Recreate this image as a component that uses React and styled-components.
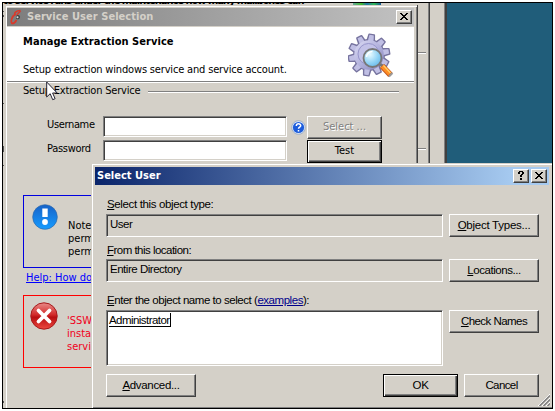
import React from "react";
import styled, { createGlobalStyle, css } from "styled-components";

const Global = createGlobalStyle`
  * { box-sizing: border-box; }
  body { margin: 0; background: #fff; overflow: hidden; }
`;

const tahoma = css`
  font-family: "DejaVu Sans Condensed", "DejaVu Sans", sans-serif;
  font-stretch: condensed;
  font-size: 11px;
`;
const sans = css`
  font-family: "Liberation Sans", Arial, sans-serif;
  font-size: 11.5px;
`;

const Desktop = styled.main`
  position: relative;
  width: 551px;
  height: 407px;
  margin: 2px;
  border: 1px solid #000;
  background: #205d7a;
  overflow: hidden;
  color: #000;
`;

const BackWindow = styled.section`
  position: absolute;
  left: 0;
  top: 0;
  width: 444px;
  height: 405px;
  background: #d4d0c8;
  border-right: 2px solid #404040;
  box-shadow: inset -1px 0 #808080;
  display: flex;
  justify-content: space-between;
`;
const BackText = styled.div`
  ${tahoma}
  font-weight: bold;
  line-height: 8px;
  height: 2px;
  width: 302px;
  overflow: hidden;
  display: flex;
  align-items: flex-end;
  white-space: nowrap;
  letter-spacing: -1px;
`;
const BackIcon = styled.div`
  width: 28px;
  height: 2px;
  background: linear-gradient(90deg, #6a9, #4b3 30%, #27a 50%, #3b5 75%, #159);
`;
const BackPane = styled.div`
  width: 16px;
  height: 405px;
  border-left: 1px solid #404040;
  box-shadow: -1px 0 #808080;
`;
const BackRule = styled.div`
  position: absolute;
  left: 415px;
  top: ${(p) => p.$y}px;
  width: 8px;
  height: 2px;
  background: #808080;
  border-bottom: 1px solid #fff;
`;
const EdgeMark = styled.div`
  position: absolute;
  left: 0;
  top: ${(p) => p.$y}px;
  width: 1px;
  height: ${(p) => p.$h}px;
  background: #555;
`;

const ServiceWindow = styled.section`
  position: absolute;
  left: 2px;
  top: 2px;
  width: 413px;
  height: 410px;
  padding: 3px 3px 0 2px;
  background: #d4d0c8;
  border-right: 1px solid #404040;
  box-shadow: inset 1px 1px #d4d0c8, inset 2px 2px #fff, inset -1px 0 #808080;
`;
const TitleBar = styled.header`
  display: flex;
  align-items: center;
  height: 18px;
  padding: 0 2px 0 ${(p) => (p.$active ? 2 : 3)}px;
  gap: ${(p) => (p.$active ? 2 : 4)}px;
  background: ${(p) =>
    p.$active
      ? "linear-gradient(90deg, #0a246a, #a6caf0 92%)"
      : "linear-gradient(90deg, #7d7d7d, #c2c2c2)"};
  color: ${(p) => (p.$active ? "#fff" : "#d4d0c8")};
`;
const Title = styled.h1`
  ${tahoma}
  flex: 1;
  margin: 0;
  font-weight: bold;
  line-height: 18px;
  letter-spacing: ${(p) => p.$ls || 0}px;
  white-space: nowrap;
`;
const CaptionButton = styled.button`
  width: 16px;
  height: 14px;
  padding: 0;
  border: 1px solid;
  border-color: #fff #404040 #404040 #fff;
  box-shadow: inset -1px -1px #808080;
  background: #d4d0c8;
  display: grid;
  place-items: center;
`;

const Banner = styled.div`
  display: flex;
  justify-content: space-between;
  height: 56px;
  margin-top: 1px;
  padding: 6px 20px 0 16px;
  background: #fff;
  border-bottom: 1px solid #fff;
  box-shadow: inset 0 -1px #808080;
`;
const BannerText = styled.div`
  display: flex;
  flex-direction: column;
  gap: 12px;
  padding-top: 1px;
`;
const Text = styled.span`
  ${tahoma}
  line-height: 16px;
  white-space: nowrap;
  letter-spacing: ${(p) => p.$ls || 0}px;
  font-weight: ${(p) => (p.$bold ? "bold" : "normal")};
`;
const Group = styled.div`
  display: flex;
  align-items: center;
  height: 16px;
  margin-left: 16px;
  width: 376px;
  gap: 8px;
`;
const GroupRule = styled.div`
  flex: 1;
  height: 2px;
  margin-top: 2px;
  background: #808080;
  border-bottom: 1px solid #fff;
`;
const Form = styled.div`
  display: grid;
  grid-template-columns: 56px 184px 20px 75px;
  grid-template-rows: 23px 23px;
  row-gap: 1px;
  margin: 17px 0 0 40px;
`;
const FormLabel = styled(Text).attrs({ as: "label" })`
  line-height: 18px;
`;
const Field = styled.div`
  height: ${(p) => p.$h || 21}px;
  border: 1px solid;
  border-color: #808080 #fff #fff #808080;
  box-shadow: inset 1px 1px #404040, inset -1px -1px #d4d0c8;
  background: ${(p) => (p.$flat ? "#d4d0c8" : "#fff")};
  padding: ${(p) => p.$pad || "1px 3px"};
  line-height: 16px;
  font-size: 11px;
`;
const HelpCell = styled.div`
  padding: 4px 0 0 4px;
  height: 20px;
`;
const Button = styled.button`
  ${(p) => (p.$tahoma ? tahoma : sans)}
  width: ${(p) => p.$w || 90}px;
  height: 23px;
  padding: 0 0 1px;
  white-space: nowrap;
  line-height: 16px;
  letter-spacing: ${(p) => p.$ls || 0}px;
  background: #d4d0c8;
  color: #000;
  border: 1px solid;
  border-color: #fff #404040 #404040 #fff;
  box-shadow: inset -1px -1px #808080;
  ${(p) =>
    p.$default &&
    css`
      border-color: #000;
      box-shadow: inset 1px 1px #fff, inset -1px -1px #404040, inset -2px -2px #808080;
    `}
  ${(p) =>
    p.$disabled &&
    css`
      color: #808080;
      text-shadow: 1px 1px #fff;
    `}
`;
const Notice = styled.div`
  display: flex;
  align-items: flex-start;
  width: 360px;
  height: 73px;
  margin-left: 16px;
  margin-top: ${(p) => p.$mt}px;
  padding: ${(p) => (p.$error ? "6px 0 0 6px" : "8px 0 0 8px")};
  gap: ${(p) => (p.$error ? 9 : 10)}px;
  border: 1px solid ${(p) => (p.$error ? "#f00" : "#0000e0")};
  color: ${(p) => (p.$error ? "#f00020" : "#000")};
`;
const NoticeText = styled.p`
  ${tahoma}
  margin: ${(p) => p.$mt}px 0 0;
  line-height: 13px;
  white-space: pre;
`;
const HelpLink = styled.a`
  ${tahoma}
  display: block;
  margin: 1px 0 0 19px;
  height: 17px;
  line-height: 17px;
  color: #00f;
  text-decoration: underline;
  white-space: nowrap;
`;

const Dialog = styled.section`
  position: absolute;
  left: 88px;
  top: 160px;
  width: 461px;
  height: 245px;
  padding: 4px 3px 0 4px;
  background: #d4d0c8;
  box-shadow: inset 1px 1px #d4d0c8, inset 2px 2px #fff, inset 0 -1px #808080;
`;
const DialogBody = styled.div`
  display: flex;
  flex-direction: column;
  padding: 11px 10px 0 11px;
`;
const Label = styled.label`
  ${sans}
  height: 16px;
  line-height: 16px;
  margin-top: ${(p) => p.$mt || 0}px;
  padding-left: 1px;
  white-space: nowrap;
  letter-spacing: ${(p) => p.$ls || 0}px;
`;
const FieldRow = styled.div`
  display: grid;
  grid-template-columns: 337px 90px;
  column-gap: 6px;
  align-items: start;
  margin-top: ${(p) => p.$mt}px;
`;
const Value = styled.span`
  ${sans}
  display: block;
  line-height: 16px;
  letter-spacing: ${(p) => p.$ls || 0}px;
  ${(p) =>
    p.$boxed &&
    css`
      width: fit-content;
      border-right: 1px solid #000;
      border-bottom: 1px solid #000;
      height: 14px;
      line-height: 14px;
    `}
`;
const Examples = styled.a`
  color: #00008b;
  text-decoration: underline;
`;
const Actions = styled.footer`
  display: flex;
  gap: 6px;
  margin-top: 8px;
`;
const Spacer = styled.div`
  flex: 1;
`;
const Grip = styled.svg`
  position: absolute;
  right: 2px;
  bottom: 2px;
`;
const Cursor = styled.svg`
  position: absolute;
  left: 43px;
  top: 78px;
`;

const CloseGlyph = () => (
  <svg width="10" height="8" viewBox="0 0 10 8" shapeRendering="crispEdges" fill="#000">
    {[0, 1, 2].map((i) => (
      <React.Fragment key={i}>
        <rect x={i + 1} y={i} width="2" height="1" />
        <rect x={7 - i} y={i} width="2" height="1" />
        <rect x={i + 1} y={6 - i} width="2" height="1" />
        <rect x={7 - i} y={6 - i} width="2" height="1" />
      </React.Fragment>
    ))}
    <rect x="4" y="3" width="2" height="1" />
  </svg>
);
const QuestionGlyph = () => (
  <svg width="8" height="10" viewBox="0 0 8 10" shapeRendering="crispEdges" fill="#000">
    <path d="M2 0h4v1h-4zM1 1h2v2h-2zM5 1h2v2h-2zM4 3h2v1h-2zM3 4h2v2h-2zM3 7h2v2h-2z" />
  </svg>
);
const AppIcon = () => (
  <svg width="13" height="16" viewBox="0 0 13 16" fill="none">
    <path d="M10.500 1.500C6 1.500 3.500 4 5.500 6.500M5.500 5C1.500 7.500 .5 12.500 2 14.500C4.500 14.500 5.500 13 6.500 11" stroke="#d93a2b" strokeWidth="1.700" />
    <path d="M10.500 2 6.800 6" stroke="#d93a2b" strokeWidth="1.400" />
    <path d="M6.500 6.500c2-1 4 0 3.500 2s-3 2.500-4 1z" fill="#444" />
    <circle cx="7.500" cy="8.300" r="1" fill="#ddd" />
  </svg>
);

const teeth = Array.from({ length: 10 }, (_, i) => i * 36 + 9);
const GearIcon = () => (
  <svg width="46" height="46" viewBox="0 0 46 46">
    <defs>
      <linearGradient id="gear" x1="0" y1="0" x2="1" y2="1">
        <stop offset="0" stopColor="#dcdcf4" />
        <stop offset=".5" stopColor="#b4b3de" />
        <stop offset="1" stopColor="#8280b8" />
      </linearGradient>
      <radialGradient id="lens" cx=".35" cy=".3" r=".8">
        <stop offset="0" stopColor="#e8fbff" />
        <stop offset=".6" stopColor="#8fd2f5" />
        <stop offset="1" stopColor="#62b5e8" />
      </radialGradient>
    </defs>
    <g stroke="#77749f" strokeWidth="1.800" fill="#b7b6e0" strokeLinejoin="round">
      {teeth.map((a) => (
        <path key={a} d="M17 8 18 1.500h5l1 6.500z" transform={`rotate(${a} 21 22)`} />
      ))}
      <circle cx="21" cy="22" r="15" />
    </g>
    <g fill="#c0bfe4">
      {teeth.map((a) => (
        <path key={a} d="M17.500 10 18.400 2h4.200l1 8z" transform={`rotate(${a} 21 22)`} />
      ))}
    </g>
    <circle cx="21" cy="22" r="14.800" fill="url(#gear)" />
    <circle cx="20.500" cy="21" r="10.500" fill="#c3c2e8" stroke="#9896cb" />
    <path d="m32 31 3.500 3.500" stroke="#777" strokeWidth="3" />
    <circle cx="24.500" cy="25" r="9" fill="url(#lens)" stroke="#777777" strokeWidth="1.800" />
    <path d="M18.500 24a6 6 0 0 1 6-5.500" stroke="#fff" strokeWidth="1.500" fill="none" />
    <path d="m34 33 8.500 9" stroke="#c4571b" strokeWidth="6" />
    <path d="m34.300 33 7.500 8" stroke="#ff8d25" strokeWidth="4.200" />
    <path d="m35.500 32.500 7 7.500" stroke="#ffd36d" strokeWidth="1.200" />
    <path d="m41 43.500 3.500-3.500" stroke="#999" strokeWidth="2" />
  </svg>
);
const HelpIcon = () => (
  <svg width="15" height="15" viewBox="0 0 15 15">
    <circle cx="7.500" cy="7.500" r="6.800" fill="#dce8f8" stroke="#8b9fbd" strokeWidth=".7" />
    <circle cx="7.500" cy="7.500" r="5.600" fill="#1d5cdb" />
    <path d="M5.300 6c0-3 4.600-2.800 4.400-.2C9.500 7 7.500 7.200 7.500 8.700M7.500 10v1.600" fill="none" stroke="#fff" strokeWidth="1.500" />
  </svg>
);
const InfoIcon = () => (
  <svg width="26" height="26" viewBox="0 0 26 26">
    <defs>
      <linearGradient id="info" x1="0" y1="0" x2="0" y2="1">
        <stop offset="0" stopColor="#1762c8" />
        <stop offset="1" stopColor="#169cff" />
      </linearGradient>
    </defs>
    <circle cx="13" cy="13" r="12.300" fill="url(#info)" stroke="#316aab" strokeWidth=".7" />
    <path d="M10.300 4.500h5.400v8.500h-5.400z" fill="#fff" />
    <circle cx="13" cy="18" r="2.900" fill="#fff" />
  </svg>
);
const ErrorIcon = () => (
  <svg width="28" height="28" viewBox="0 0 28 28">
    <defs>
      <linearGradient id="err" x1="0" y1="0" x2="0" y2="1">
        <stop offset="0" stopColor="#e98b88" />
        <stop offset=".45" stopColor="#d22b2b" />
        <stop offset=".55" stopColor="#b80f12" />
        <stop offset="1" stopColor="#ee4940" />
      </linearGradient>
    </defs>
    <circle cx="14" cy="14" r="13.200" fill="url(#err)" stroke="#a61a1c" />
    <path d="m8.500 8.500 11 11m0-11-11 11" stroke="#fff" strokeWidth="3.800" strokeLinecap="round" />
  </svg>
);

export default function App() {
  return (
    <>
      <Global />
      <Desktop>
        <BackWindow>
          <BackText>to service runs under the maintenance how many mailboxes can be</BackText>
          <BackIcon />
          <BackPane />
        </BackWindow>
        <EdgeMark $y={8} $h={1} />
        <EdgeMark $y={12} $h={2} />
        <EdgeMark $y={100} $h={1} />
        <EdgeMark $y={143} $h={6} />
        <EdgeMark $y={162} $h={1} />
        <EdgeMark $y={398} $h={2} />
        <BackRule $y={49} />
        <BackRule $y={145} />

        <ServiceWindow>
          <TitleBar>
            <AppIcon />
            <Title $ls={0.05}>Service User Selection</Title>
            <CaptionButton aria-label="Close"><CloseGlyph /></CaptionButton>
          </TitleBar>
          <Banner>
            <BannerText>
              <Text $bold $ls={0.05}>Manage Extraction Service</Text>
              <Text $ls={-0.17}>Setup extraction windows service and service account.</Text>
            </BannerText>
            <GearIcon />
          </Banner>
          <Group>
            <Text $ls={-0.2}>Setup Extraction Service</Text>
            <GroupRule />
          </Group>
          <Form>
            <FormLabel $ls={-0.35}>Username</FormLabel>
            <Field />
            <HelpCell><HelpIcon /></HelpCell>
            <Button $tahoma $disabled $w={75}>Select ...</Button>
            <FormLabel $ls={-0.3}>Password</FormLabel>
            <Field />
            <span />
            <Button $tahoma $default $w={75}>Test</Button>
          </Form>
          <Notice $mt={32}>
            <InfoIcon />
            <NoticeText $mt={15}>{"Note\nperm\nperm"}</NoticeText>
          </Notice>
          <HelpLink>Help: How do I</HelpLink>
          <Notice $error $mt={9}>
            <ErrorIcon />
            <NoticeText $mt={12}>{"'SSW\ninstall\nservice"}</NoticeText>
          </Notice>
        </ServiceWindow>

        <Dialog>
          <TitleBar $active>
            <Title>Select User</Title>
            <CaptionButton aria-label="Help"><QuestionGlyph /></CaptionButton>
            <CaptionButton aria-label="Close"><CloseGlyph /></CaptionButton>
          </TitleBar>
          <DialogBody>
            <Label $ls={-0.36}><u>S</u>elect this object type:</Label>
            <FieldRow $mt={2}>
              <Field $flat $h={23}><Value $ls={-0.5}>User</Value></Field>
              <Button $ls={-0.25}><u>O</u>bject Types...</Button>
            </FieldRow>
            <Label $mt={5} $ls={-0.52}><u>F</u>rom this location:</Label>
            <FieldRow $mt={1}>
              <Field $flat $h={23}><Value $ls={-0.48}>Entire Directory</Value></Field>
              <Button $ls={-0.45}><u>L</u>ocations...</Button>
            </FieldRow>
            <Label $mt={10} $ls={-0.46}>
              <u>E</u>nter the object name to select (<Examples>examples</Examples>):
            </Label>
            <FieldRow $mt={2}>
              <Field $h={56} $pad="2px 2px"><Value $boxed $ls={-0.55}>Administrator</Value></Field>
              <Button $ls={-0.55}><u>C</u>heck Names</Button>
            </FieldRow>
            <Actions>
              <Button $ls={-0.32}><u>A</u>dvanced...</Button>
              <Spacer />
              <Button $default $w={75} $ls={-0.3}>OK</Button>
              <Button $w={75} $ls={-0.6}>Cancel</Button>
            </Actions>
          </DialogBody>
          <Grip width="12" height="12" viewBox="0 0 12 12">
            <path d="M0 12 12 0M4 12l8-8M8 12l4-4" stroke="#fff" strokeWidth="1" />
            <path d="M1.500 12 12 1.500M5.500 12 12 5.500M9.500 12 12 9.500" stroke="#808080" strokeWidth="1.500" />
          </Grip>
        </Dialog>

        <Cursor width="12" height="20" viewBox="0 0 12 20">
          <path d="M.7 1v15l3.500-3.300 2.500 6 2.400-1-2.500-5.700h4.600z" fill="#fff" stroke="#223" strokeWidth="1" />
        </Cursor>
      </Desktop>
    </>
  );
}
